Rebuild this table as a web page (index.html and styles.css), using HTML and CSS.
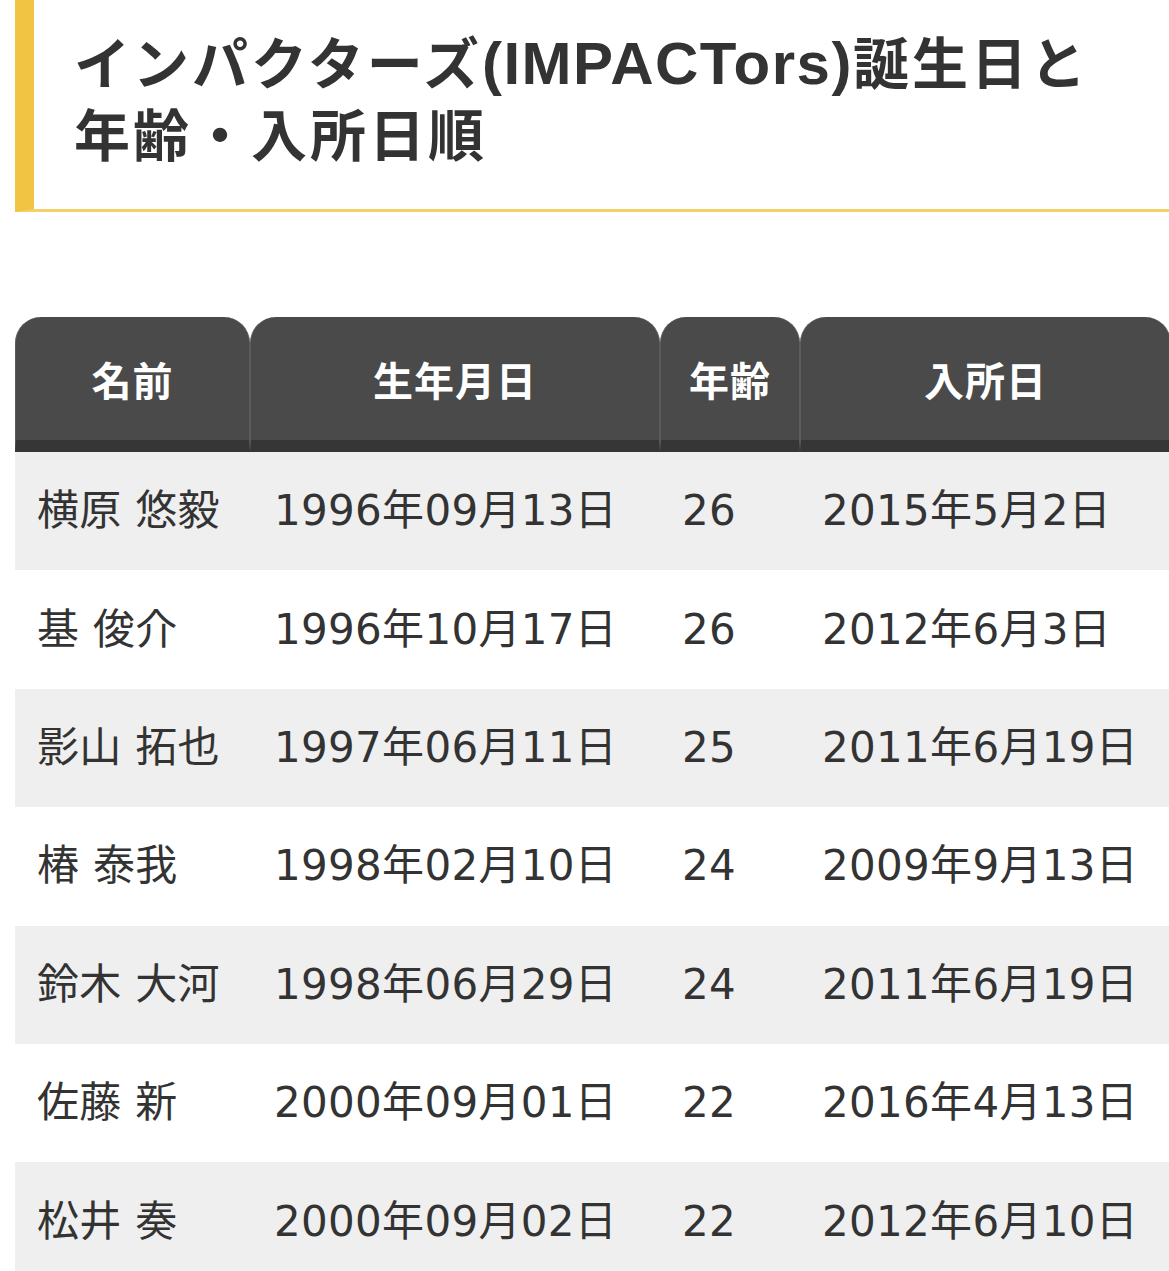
FILE: index.html
```html
<!DOCTYPE html>
<html lang="ja">
<head>
<meta charset="utf-8">
<title>インパクターズ(IMPACTors)誕生日と年齢・入所日順</title>
<link rel="stylesheet" href="styles.css">
</head>
<body>
<div class="page">
  <h2 class="title">インパクターズ<span class="latin">(IMPACTors)</span>誕生日と<br>年齢・入所日順</h2>
  <table class="members">
    <colgroup>
      <col class="c-name">
      <col class="c-birth">
      <col class="c-age">
      <col class="c-join">
    </colgroup>
    <thead>
      <tr>
        <th>名前</th>
        <th>生年月日</th>
        <th>年齢</th>
        <th>入所日</th>
      </tr>
    </thead>
    <tbody>
      <tr><td>横原 悠毅</td><td>1996年09月13日</td><td>26</td><td>2015年5月2日</td></tr>
      <tr><td>基 俊介</td><td>1996年10月17日</td><td>26</td><td>2012年6月3日</td></tr>
      <tr><td>影山 拓也</td><td>1997年06月11日</td><td>25</td><td>2011年6月19日</td></tr>
      <tr><td>椿 泰我</td><td>1998年02月10日</td><td>24</td><td>2009年9月13日</td></tr>
      <tr><td>鈴木 大河</td><td>1998年06月29日</td><td>24</td><td>2011年6月19日</td></tr>
      <tr><td>佐藤 新</td><td>2000年09月01日</td><td>22</td><td>2016年4月13日</td></tr>
      <tr><td>松井 奏</td><td>2000年09月02日</td><td>22</td><td>2012年6月10日</td></tr>
    </tbody>
  </table>
</div>
</body>
</html>
```

FILE: styles.css
```css
html, body {
  margin: 0;
  padding: 0;
  background: #ffffff;
}

body {
  font-family: "DejaVu Sans", "Noto Sans CJK JP", sans-serif;
  color: #333333;
  overflow: hidden;
}

.page {
  padding: 0 0 0 15px;
  width: 1160px;
}

.title {
  margin: 0;
  padding: 29px 20px 36px 40px;
  border-left: 19px solid #f2c443;
  border-bottom: 3px solid #f2d169;
  font-family: "Liberation Sans", "Noto Sans CJK JP", sans-serif;
  font-weight: 700;
  font-size: 56px;
  line-height: 72px;
  letter-spacing: 3px;
  color: #333333;
  white-space: nowrap;
}

.title .latin {
  font-size: 60px;
  line-height: 1;
  letter-spacing: 1.5px;
}

.members {
  margin-top: 105px;
  width: 1156px;
  border-collapse: separate;
  border-spacing: 0;
  table-layout: fixed;
}

.c-name { width: 235px; }
.c-birth { width: 410px; }
.c-age { width: 140px; }
.c-join { width: 371px; }

.members th {
  height: 123px;
  padding: 0;
  background: #4a4a4a;
  color: #ffffff;
  font-family: "Noto Sans CJK JP", sans-serif;
  font-weight: 700;
  font-size: 40px;
  letter-spacing: 1px;
  text-align: center;
  border-radius: 26px 26px 0 0;
  border-left: 1px solid #5c5c5c;
  border-right: 1px solid #5c5c5c;
  border-bottom: 12px solid #363636;
}

.members td {
  height: 118.4px;
  padding: 0 0 0 22px;
  font-size: 42px;
  line-height: 48px;
  letter-spacing: 0.3px;
  color: #333333;
  white-space: nowrap;
  vertical-align: middle;
}

.members td:nth-child(2) { padding-left: 24px; }

.members tbody tr:nth-child(odd) td {
  background: #efefef;
}

.members tbody tr:nth-child(even) td {
  background: #ffffff;
}
```
